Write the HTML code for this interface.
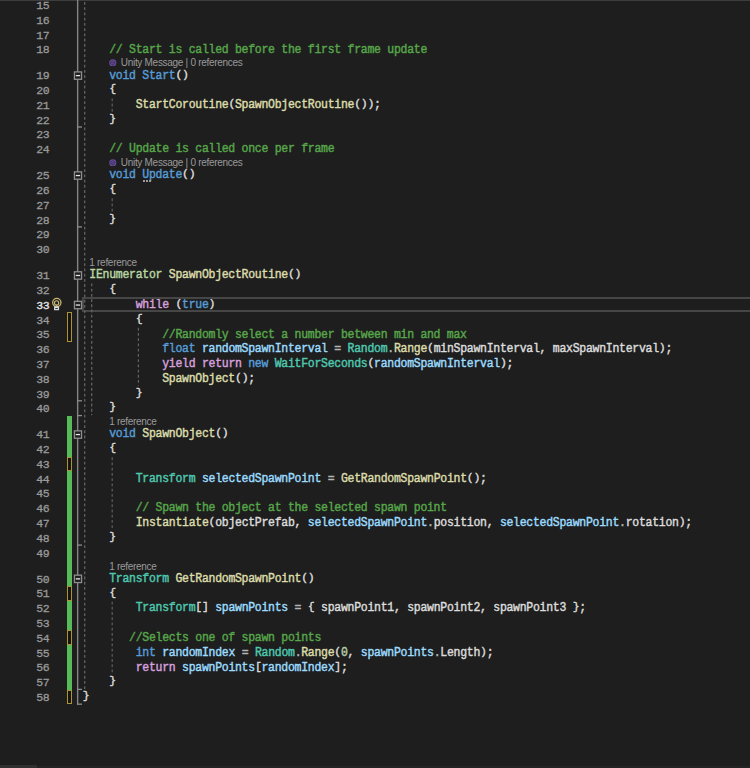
<!DOCTYPE html>
<html><head><meta charset="utf-8"><style>
html,body{margin:0;padding:0;}
body{width:750px;height:768px;background:#1e1e1e;position:relative;overflow:hidden;}
.topb{position:absolute;left:0;top:0;width:750px;height:1px;background:#3d3d3d;}
.botb{position:absolute;left:0;top:765px;width:37px;height:3px;background:#303030;}
.botc{position:absolute;left:37px;top:766px;width:713px;height:2px;background:#242424;}
.ln{position:absolute;left:0;width:49.50px;text-align:right;height:14.79px;line-height:14.79px;font-family:"Liberation Mono",monospace;font-size:11.50px;letter-spacing:-0.280px;color:#9a9a9a;white-space:pre;-webkit-text-stroke:0.3px currentColor;}
.ln.cur{color:#e8e8e8;}
.cd{position:absolute;left:82.70px;height:14.79px;line-height:14.79px;font-family:"Liberation Mono",monospace;font-size:11.50px;letter-spacing:-0.280px;color:#dcdcdc;white-space:pre;-webkit-text-stroke:0.4px currentColor;transform:scaleY(1.050);transform-origin:0 50%;}
.br{display:inline-block;transform:scaleY(0.86);transform-origin:0 30%;}
.o{color:#b4b4b4}.k{color:#569cd6}.u{color:#569cd6}.c{color:#d8a0df}.t{color:#4ec9b0}.i{color:#b8d7a3}.m{color:#dcdcaa}.l{color:#9cdcfe}.g{color:#57a64a}.n{color:#b5cea8}
.lens{position:absolute;height:11.19px;line-height:11.19px;font-family:"Liberation Sans",sans-serif;font-size:10px;letter-spacing:-0.29px;color:#9a9a9a;white-space:pre;}
.uic{display:inline-block;width:7.6px;height:7.6px;margin-left:0.3px;margin-right:3.7px;vertical-align:0px;}
.curbox{position:absolute;left:82px;width:680px;box-sizing:border-box;border:2px solid #464646;border-right:none;}
.ov{position:absolute;left:0;top:0;}
.vline{position:absolute;left:77.2px;width:1.3px;background:#959595;}
.fbox{position:absolute;left:73.8px;width:8.4px;height:8.6px;box-sizing:border-box;border:1.3px solid #909090;background:#1e1e1e;}
.fbox i{position:absolute;left:0.5px;top:2.45px;width:4.3px;height:1.5px;background:#e6e6e6;}
.tick{position:absolute;left:77px;width:4.5px;height:1px;background:#9a9a9a;}
.green{position:absolute;left:67px;width:5px;background:#57bb5a;}
.ybox{position:absolute;left:67px;width:5px;box-sizing:border-box;border:1.8px solid #ab952e;background:#151515;}
.g0{position:absolute;width:1.2px;background:repeating-linear-gradient(to bottom,#666 0,#666 2.8px,transparent 2.8px,transparent 5.2233px);}
.g1{position:absolute;width:1.1px;background:repeating-linear-gradient(to bottom,#626262 0,#626262 2.6px,transparent 2.6px,transparent 5.2233px);}
.bulb{position:absolute;left:49px;}
.dots{position:absolute;width:9px;height:1.4px;background:repeating-linear-gradient(to right,#9a9a9a 0,#9a9a9a 1.6px,transparent 1.6px,transparent 3px);}
</style></head>
<body>
<div class="topb"></div><div class="botb"></div><div class="botc"></div>
<div class="ln" style="top:-1.03px">15</div>
<div class="ln" style="top:13.76px">16</div>
<div class="ln" style="top:28.55px">17</div>
<div class="ln" style="top:43.34px">18</div>
<div class="cd" style="top:42.54px">    <span class="g">// Start is called before the first frame update</span></div>
<div class="ln" style="top:69.32px">19</div>
<div class="cd" style="top:68.52px">    <span class="k">void</span> <span class="u">Start</span><span class="br">(</span><span class="br">)</span></div>
<div class="ln" style="top:84.11px">20</div>
<div class="cd" style="top:83.31px">    <span class="br">{</span></div>
<div class="ln" style="top:98.90px">21</div>
<div class="cd" style="top:98.10px">        <span class="m">StartCoroutine</span><span class="br">(</span><span class="m">SpawnObjectRoutine</span><span class="br">(</span><span class="br">)</span><span class="br">)</span>;</div>
<div class="ln" style="top:113.69px">22</div>
<div class="cd" style="top:112.89px">    <span class="br">}</span></div>
<div class="ln" style="top:128.48px">23</div>
<div class="ln" style="top:143.27px">24</div>
<div class="cd" style="top:142.47px">    <span class="g">// Update is called once per frame</span></div>
<div class="ln" style="top:169.25px">25</div>
<div class="cd" style="top:168.45px">    <span class="k">void</span> <span class="u">Update</span><span class="br">(</span><span class="br">)</span></div>
<div class="ln" style="top:184.04px">26</div>
<div class="cd" style="top:183.24px">    <span class="br">{</span></div>
<div class="ln" style="top:198.83px">27</div>
<div class="ln" style="top:213.62px">28</div>
<div class="cd" style="top:212.82px">    <span class="br">}</span></div>
<div class="ln" style="top:228.41px">29</div>
<div class="ln" style="top:243.20px">30</div>
<div class="ln" style="top:269.18px">31</div>
<div class="cd" style="top:268.38px"> <span class="i">IEnumerator</span> <span class="m">SpawnObjectRoutine</span><span class="br">(</span><span class="br">)</span></div>
<div class="ln" style="top:283.97px">32</div>
<div class="cd" style="top:283.17px">    <span class="br">{</span></div>
<div class="ln cur" style="top:298.76px">33</div>
<div class="cd" style="top:297.96px">        <span class="c">while</span> <span class="br">(</span><span class="k">true</span><span class="br">)</span></div>
<div class="ln" style="top:313.55px">34</div>
<div class="cd" style="top:312.75px">        <span class="br">{</span></div>
<div class="ln" style="top:328.34px">35</div>
<div class="cd" style="top:327.54px">            <span class="g">//Randomly select a number between min and max</span></div>
<div class="ln" style="top:343.13px">36</div>
<div class="cd" style="top:342.33px">            <span class="k">float</span> <span class="l">randomSpawnInterval</span> <span class="o">=</span> <span class="t">Random</span><span class="o">.</span><span class="m">Range</span><span class="br">(</span>minSpawnInterval, maxSpawnInterval<span class="br">)</span>;</div>
<div class="ln" style="top:357.92px">37</div>
<div class="cd" style="top:357.12px">            <span class="c">yield</span> <span class="c">return</span> <span class="k">new</span> <span class="t">WaitForSeconds</span><span class="br">(</span><span class="l">randomSpawnInterval</span><span class="br">)</span>;</div>
<div class="ln" style="top:372.71px">38</div>
<div class="cd" style="top:371.91px">            <span class="m">SpawnObject</span><span class="br">(</span><span class="br">)</span>;</div>
<div class="ln" style="top:387.50px">39</div>
<div class="cd" style="top:386.70px">        <span class="br">}</span></div>
<div class="ln" style="top:402.29px">40</div>
<div class="cd" style="top:401.49px">    <span class="br">}</span></div>
<div class="ln" style="top:428.27px">41</div>
<div class="cd" style="top:427.47px">    <span class="k">void</span> <span class="m">SpawnObject</span><span class="br">(</span><span class="br">)</span></div>
<div class="ln" style="top:443.06px">42</div>
<div class="cd" style="top:442.26px">    <span class="br">{</span></div>
<div class="ln" style="top:457.85px">43</div>
<div class="ln" style="top:472.64px">44</div>
<div class="cd" style="top:471.84px">        <span class="t">Transform</span> <span class="l">selectedSpawnPoint</span> <span class="o">=</span> <span class="m">GetRandomSpawnPoint</span><span class="br">(</span><span class="br">)</span>;</div>
<div class="ln" style="top:487.43px">45</div>
<div class="ln" style="top:502.22px">46</div>
<div class="cd" style="top:501.42px">        <span class="g">// Spawn the object at the selected spawn point</span></div>
<div class="ln" style="top:517.01px">47</div>
<div class="cd" style="top:516.21px">        <span class="m">Instantiate</span><span class="br">(</span>objectPrefab, <span class="l">selectedSpawnPoint</span><span class="o">.</span>position, <span class="l">selectedSpawnPoint</span><span class="o">.</span>rotation<span class="br">)</span>;</div>
<div class="ln" style="top:531.80px">48</div>
<div class="cd" style="top:531.00px">    <span class="br">}</span></div>
<div class="ln" style="top:546.59px">49</div>
<div class="ln" style="top:572.57px">50</div>
<div class="cd" style="top:571.77px">    <span class="t">Transform</span> <span class="m">GetRandomSpawnPoint</span><span class="br">(</span><span class="br">)</span></div>
<div class="ln" style="top:587.36px">51</div>
<div class="cd" style="top:586.56px">    <span class="br">{</span></div>
<div class="ln" style="top:602.15px">52</div>
<div class="cd" style="top:601.35px">        <span class="t">Transform</span><span class="br">[</span><span class="br">]</span> <span class="l">spawnPoints</span> <span class="o">=</span> <span class="br">{</span> spawnPoint1, spawnPoint2, spawnPoint3 <span class="br">}</span>;</div>
<div class="ln" style="top:616.94px">53</div>
<div class="ln" style="top:631.73px">54</div>
<div class="cd" style="top:630.93px">       <span class="g">//Selects one of spawn points</span></div>
<div class="ln" style="top:646.52px">55</div>
<div class="cd" style="top:645.72px">        <span class="k">int</span> <span class="l">randomIndex</span> <span class="o">=</span> <span class="t">Random</span><span class="o">.</span><span class="m">Range</span><span class="br">(</span><span class="n">0</span>, <span class="l">spawnPoints</span><span class="o">.</span>Length<span class="br">)</span>;</div>
<div class="ln" style="top:661.31px">56</div>
<div class="cd" style="top:660.51px">        <span class="c">return</span> <span class="l">spawnPoints</span><span class="br">[</span><span class="l">randomIndex</span><span class="br">]</span>;</div>
<div class="ln" style="top:676.10px">57</div>
<div class="cd" style="top:675.30px">    <span class="br">}</span></div>
<div class="ln" style="top:690.89px">58</div>
<div class="cd" style="top:690.09px"><span class="br">}</span></div>
<div class="lens" style="top:57.33px;left:109.18px"><svg class="uic" width="8" height="8" viewBox="0 0 8 8"><circle cx="4" cy="4" r="3.75" fill="#6a4f9e"/><path d="M4 1.6 L6.2 2.9 L6.2 5.2 L4 6.5 L1.8 5.2 L1.8 2.9 Z" fill="none" stroke="#3c2d5e" stroke-width="0.9"/><path d="M4 4 L4 6.4 M4 4 L6.1 2.9 M4 4 L1.9 2.9" stroke="#3c2d5e" stroke-width="0.7"/></svg>Unity Message | 0 references</div>
<div class="lens" style="top:157.26px;left:109.18px"><svg class="uic" width="8" height="8" viewBox="0 0 8 8"><circle cx="4" cy="4" r="3.75" fill="#6a4f9e"/><path d="M4 1.6 L6.2 2.9 L6.2 5.2 L4 6.5 L1.8 5.2 L1.8 2.9 Z" fill="none" stroke="#3c2d5e" stroke-width="0.9"/><path d="M4 4 L4 6.4 M4 4 L6.1 2.9 M4 4 L1.9 2.9" stroke="#3c2d5e" stroke-width="0.7"/></svg>Unity Message | 0 references</div>
<div class="lens" style="top:257.19px;left:89.32px">1 reference</div>
<div class="lens" style="top:416.28px;left:109.18px">1 reference</div>
<div class="lens" style="top:560.58px;left:109.18px">1 reference</div>
<div class="curbox" style="top:297.00px;height:15.00px"></div>
<svg class="ov" width="750" height="768" viewBox="0 0 750 768"><line x1="77.65" y1="0" x2="77.65" y2="704.78" stroke="#848484" stroke-width="1.4"/><line x1="77" y1="126.98" x2="82" y2="126.98" stroke="#8c8c8c" stroke-width="1.3"/><line x1="77" y1="226.91" x2="82" y2="226.91" stroke="#8c8c8c" stroke-width="1.3"/><line x1="77" y1="400.79" x2="82" y2="400.79" stroke="#8c8c8c" stroke-width="1.3"/><line x1="77" y1="415.58" x2="82" y2="415.58" stroke="#8c8c8c" stroke-width="1.3"/><line x1="77" y1="545.09" x2="82" y2="545.09" stroke="#8c8c8c" stroke-width="1.3"/><line x1="77" y1="689.39" x2="82" y2="689.39" stroke="#8c8c8c" stroke-width="1.3"/><line x1="77" y1="704.18" x2="82" y2="704.18" stroke="#8c8c8c" stroke-width="1.3"/><line x1="84.70" y1="-3.18" x2="84.70" y2="689.09" stroke="#636363" stroke-width="1.30" stroke-dasharray="2.8 2.4233"/><line x1="91.70" y1="283.47" x2="91.70" y2="415.28" stroke="#636363" stroke-width="1.30" stroke-dasharray="2.8 2.4233"/><line x1="112.20" y1="98.40" x2="112.20" y2="111.89" stroke="#5e5e5e" stroke-width="1.20" stroke-dasharray="2.8 2.4233"/><line x1="112.20" y1="198.33" x2="112.20" y2="211.82" stroke="#5e5e5e" stroke-width="1.20" stroke-dasharray="2.8 2.4233"/><line x1="112.20" y1="457.35" x2="112.20" y2="530.00" stroke="#5e5e5e" stroke-width="1.20" stroke-dasharray="2.8 2.4233"/><line x1="112.20" y1="601.65" x2="112.20" y2="674.30" stroke="#5e5e5e" stroke-width="1.20" stroke-dasharray="2.8 2.4233"/><line x1="138.40" y1="327.84" x2="138.40" y2="385.70" stroke="#626262" stroke-width="1.20" stroke-dasharray="2.8 2.4233"/><rect x="74.45" y="71.91" width="7.1" height="7.4" fill="#1e1e1e" stroke="#8e8e8e" stroke-width="1.3"/><line x1="75.8" y1="75.61" x2="80.1" y2="75.61" stroke="#e8e8e8" stroke-width="1.3"/><rect x="74.45" y="171.84" width="7.1" height="7.4" fill="#1e1e1e" stroke="#8e8e8e" stroke-width="1.3"/><line x1="75.8" y1="175.54" x2="80.1" y2="175.54" stroke="#e8e8e8" stroke-width="1.3"/><rect x="74.45" y="271.77" width="7.1" height="7.4" fill="#1e1e1e" stroke="#8e8e8e" stroke-width="1.3"/><line x1="75.8" y1="275.47" x2="80.1" y2="275.47" stroke="#e8e8e8" stroke-width="1.3"/><rect x="74.45" y="301.35" width="7.1" height="7.4" fill="#1e1e1e" stroke="#8e8e8e" stroke-width="1.3"/><line x1="75.8" y1="305.05" x2="80.1" y2="305.05" stroke="#e8e8e8" stroke-width="1.3"/><rect x="74.45" y="430.86" width="7.1" height="7.4" fill="#1e1e1e" stroke="#8e8e8e" stroke-width="1.3"/><line x1="75.8" y1="434.56" x2="80.1" y2="434.56" stroke="#e8e8e8" stroke-width="1.3"/><rect x="74.45" y="575.16" width="7.1" height="7.4" fill="#1e1e1e" stroke="#8e8e8e" stroke-width="1.3"/><line x1="75.8" y1="578.87" x2="80.1" y2="578.87" stroke="#e8e8e8" stroke-width="1.3"/></svg>
<div class="green" style="top:415.78px;height:288.60px"></div>
<div class="ybox" style="top:312.25px;height:29.58px"></div>
<div class="ybox" style="top:456.55px;height:14.79px"></div>
<div class="ybox" style="top:586.06px;height:14.79px"></div>
<div class="ybox" style="top:630.43px;height:14.79px"></div>
<div class="ybox" style="top:689.59px;height:14.79px"></div>
<svg class="bulb" style="top:295.00px" width="16" height="17" viewBox="0 0 16 17"><circle cx="7.8" cy="7.6" r="4.15" fill="none" stroke="#c8b56e" stroke-width="1.3"/><circle cx="7.6" cy="7.9" r="2.1" fill="none" stroke="#cdbb78" stroke-width="1.1"/><rect x="7.1" y="9.8" width="1" height="2" fill="#cdbb78"/><rect x="5" y="11.3" width="5.1" height="4" rx="0.6" fill="#d4d4d4"/><rect x="6.3" y="13" width="2.5" height="1" fill="#3a3a3a"/></svg>
<div class="dots" style="top:180.14px;left:142.78px"></div>
</body></html>
